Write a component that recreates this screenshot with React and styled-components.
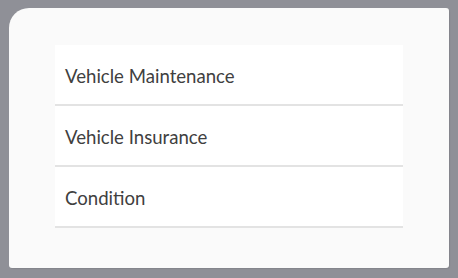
import React from 'react'
import styled, { createGlobalStyle } from 'styled-components'

const GlobalStyle = createGlobalStyle`
    html, body {
        margin: 0;
        padding: 0;
        background-color: #8f9097;
        font-family: Lato, "Open Sans", sans-serif;
    }
`

const Screen = styled.div`
    width: 458px;
    height: 278px;
    padding: 8px 0 0 9px;
    box-sizing: border-box;
`

const Panel = styled.div`
    width: 440px;
    height: 260px;
    background-color: #fafafa;
    border-radius: 20px 3px 3px 3px;
    box-shadow: 1px 1px 1px rgba(0, 0, 0, 0.08);
    padding: 37px 0 0 46px;
    box-sizing: border-box;
`

const List = styled.ul`
    list-style: none;
    margin: 0;
    padding: 0;
    width: 348px;
    background-color: #ffffff;
`

const Item = styled.li`
    display: flex;
    align-items: center;
    height: 61px;
    padding: 2px 0 0 10px;
    box-sizing: border-box;
    border-bottom: 2px solid #e3e3e3;
    color: #404040;
    font-size: 18.6px;
`

const items = ['Vehicle Maintenance', 'Vehicle Insurance', 'Condition']

export default function App() {
    return (
        <>
            <GlobalStyle />
            <Screen>
                <Panel>
                    <List>
                        {items.map(label => (
                            <Item key={label}>{label}</Item>
                        ))}
                    </List>
                </Panel>
            </Screen>
        </>
    )
}
